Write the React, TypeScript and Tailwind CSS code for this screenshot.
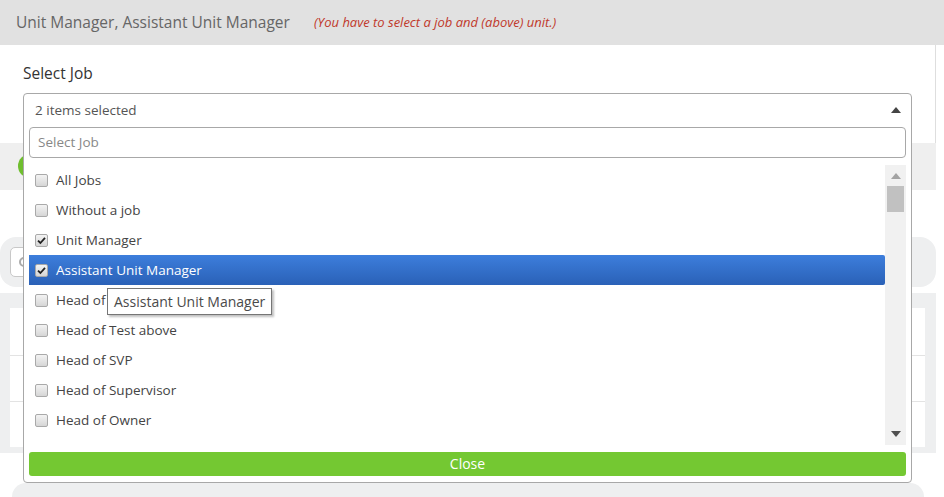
import React from "react";

const jobs = [
  { name: "All Jobs", checked: false },
  { name: "Without a job", checked: false },
  { name: "Unit Manager", checked: true },
  { name: "Assistant Unit Manager", checked: true, active: true },
  { name: "Head of Unit Manager", checked: false },
  { name: "Head of Test above", checked: false },
  { name: "Head of SVP", checked: false },
  { name: "Head of Supervisor", checked: false },
  { name: "Head of Owner", checked: false },
];

const Checkbox = ({ checked }: { checked: boolean }) => (
  <span className="flex h-[13px] w-[13px] shrink-0 items-center justify-center rounded-[2px] border border-[#a9a9a9] bg-linear-to-b from-[#f3f3f3] to-[#d6d6d6]">
    {checked && (
      <svg width="9" height="9" viewBox="0 0 9 9">
        <path d="M1 4.6 L3.4 7 L8 1.8" fill="none" stroke="#222" strokeWidth="1.8" />
      </svg>
    )}
  </span>
);

const Arrow = ({ up, color }: { up: boolean; color: string }) => (
  <svg width="10" height="6" viewBox="0 0 10 6">
    <path d={up ? "M0 6 L5 0 L10 6 Z" : "M0 0 L10 0 L5 6 Z"} fill={color} />
  </svg>
);

const JobSelect = () => (
  <div className="absolute left-0 top-0 z-10 flex h-[390px] w-[889px] flex-col rounded-[4px] border border-[#a8a8a8] bg-white">
    <div className="flex h-[32px] shrink-0 items-center justify-between pl-[11px] pr-[10px] text-[13.5px] text-[#555]">
      <span>2 items selected</span>
      <Arrow up color="#444" />
    </div>
    <div className="mx-[5px] mt-[1px] flex h-[31px] shrink-0 items-center rounded-[4px] border border-[#a8a8a8] px-[8px] text-[13.5px] text-[#888]">
      Select Job
    </div>
    <div className="relative mx-[5px] mt-[7px] flex h-[280px] shrink-0">
      <ul className="flex-1">
        {jobs.map((job) => (
          <li
            key={job.name}
            className={
              job.active
                ? "flex h-[30px] items-center gap-[8px] rounded-r-[2px] bg-linear-to-b from-[#3d7edc] to-[#2a61b7] pl-[6px] text-[13.5px] text-white"
                : "flex h-[30px] items-center gap-[8px] pl-[6px] text-[13.5px] text-[#444]"
            }
          >
            <Checkbox checked={job.checked} />
            <span>{job.name}</span>
          </li>
        ))}
      </ul>
      <div className="flex w-[21px] flex-col items-center bg-[#f1f1f1] pt-[8px]">
        <Arrow up color="#a3a3a3" />
        <div className="mt-[7px] h-[26px] w-[17px] bg-[#c1c1c1]" />
        <div className="flex-1" />
        <div className="pb-[8px]">
          <Arrow up={false} color="#505050" />
        </div>
      </div>
      <div className="absolute left-[78px] top-[123px] flex h-[27px] items-center border border-[#767676] bg-white px-[6px] text-[14px] text-[#4a4a4a] shadow-[2px_2px_2px_rgba(0,0,0,0.25)]">
        Assistant Unit Manager
      </div>
    </div>
    <button className="mx-[5px] mt-[7px] h-[24px] rounded-[3px] bg-[#74c832] text-[14px] leading-[22px] text-white">
      Close
    </button>
  </div>
);

export default function App() {
  return (
    <div className="relative h-[497px] w-[944px] overflow-hidden bg-white font-['Open_Sans',sans-serif]">
      <div className="flex h-[45px] items-center gap-[24px] bg-[#e1e1e1] px-[16px]">
        <span className="text-[15.5px] text-[#666]">Unit Manager, Assistant Unit Manager</span>
        <span className="text-[13px] italic text-[#c0392b]">
          (You have to select a job and (above) unit.)
        </span>
      </div>

      <div className="w-[936px]">
        <div className="h-[98px] border-r border-[#dedede] px-[23px] pt-[18px]">
          <div className="text-[15.5px] leading-[20px] text-[#333]">Select Job</div>
          <div className="relative mt-[10px]">
            <JobSelect />
          </div>
        </div>

        <div className="flex h-[47px] items-start bg-[#efefef] pl-[18px] pt-[11px]">
          <div className="h-[24px] w-[24px] rounded-full bg-[#6fbe2e]" />
        </div>

        <div className="h-[47px]" />

        <div className="flex h-[50px] items-center rounded-[16px] bg-[#eeeff0] px-[10px]">
          <div className="flex h-[30px] w-[320px] items-center rounded-[5px] border border-[#c8c8c8] bg-white pl-[8px]">
            <span className="h-[10px] w-[10px] rounded-full border-2 border-[#aaa]" />
          </div>
        </div>

        <div className="mt-[6px] h-[160px] bg-[#eeeff0] pb-[6px] pl-[10px] pr-[11px] pt-[15px]">
          <div className="h-full bg-white">
            <div className="h-[48px] border-b border-[#e3e3e3]" />
            <div className="h-[46px] border-b border-[#e3e3e3]" />
          </div>
        </div>

        <div className="mx-[12px] mt-[30px] h-[20px] rounded-t-[14px] bg-[#eeeff0]" />
      </div>
    </div>
  );
}
